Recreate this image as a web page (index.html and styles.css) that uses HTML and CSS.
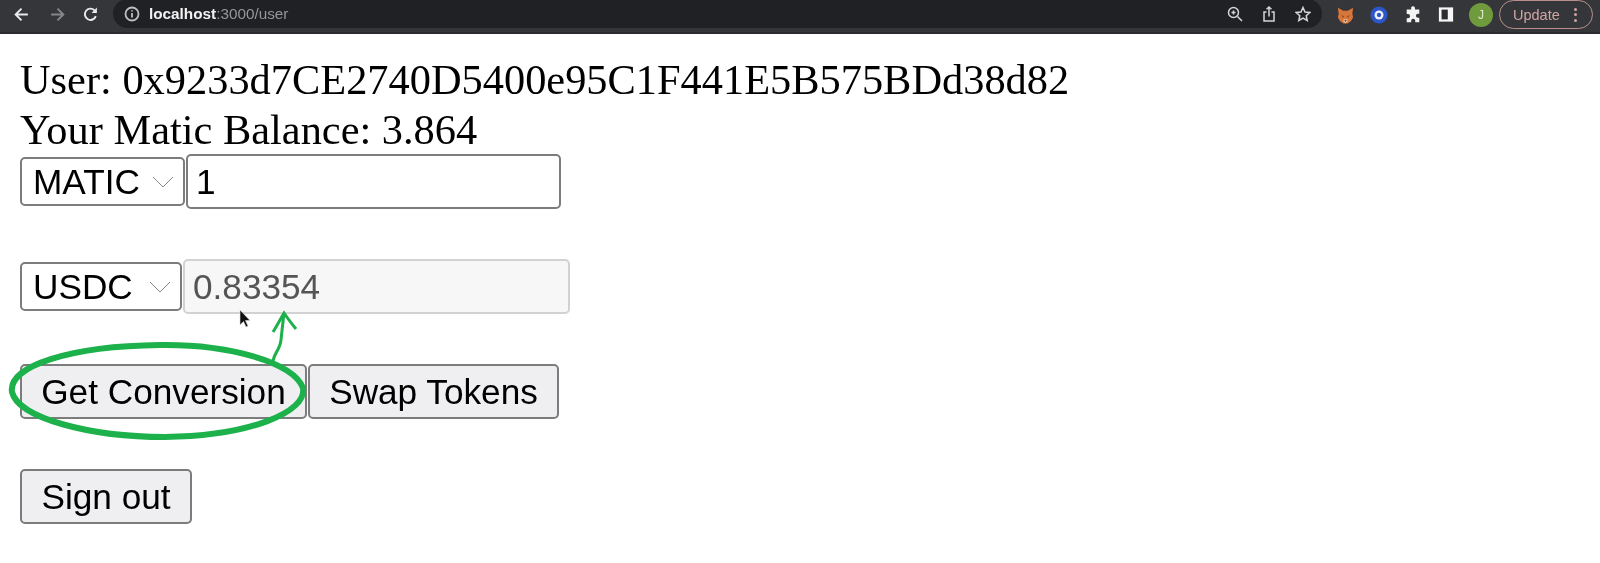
FILE: index.html
```html
<!DOCTYPE html>
<html lang="en">
<head>
  <meta charset="UTF-8">
  <title>localhost:3000/user</title>
  <link rel="stylesheet" href="styles.css">
</head>
<body>
  <header class="toolbar">
    <svg class="tb-icon back" viewBox="0 0 16 16"><path d="M14 8H2.500M8 2.500 2.500 8 8 13.500"/></svg>
    <svg class="tb-icon forward" viewBox="0 0 16 16"><path d="M2 8h11.500M8 2.500 13.500 8 8 13.500"/></svg>
    <svg class="tb-icon reload" viewBox="0 0 16 16"><path d="M13 9.500A5.300 5.300 0 1 1 11.700 4"/><path class="solid" d="M14 1.500v5H9z"/></svg>
    <div class="omnibox">
      <svg class="info" viewBox="0 0 16 16"><circle cx="8" cy="8" r="6.500"/><path d="M8 7v4.500M8 4.200v1.400"/></svg>
      <div class="url"><b>localhost</b>:3000/user</div>
      <svg class="omni-icon" viewBox="0 0 16 16"><circle cx="6.500" cy="6.500" r="5"/><path d="M10.500 10.500 15 15M4.500 6.500h4M6.500 4.500v4"/></svg>
      <svg class="omni-icon" viewBox="0 0 16 16"><path d="M5.500 6H3v9h10V6h-2.500M8 10.500V1M5.500 3.200 8 1l2.500 2.200"/></svg>
      <svg class="omni-icon" viewBox="0 0 16 16"><path d="M8 1.500 10 6l4.800.5-3.600 3.200 1 4.800L8 12l-4.200 2.500 1-4.800L1.200 6.500 6 6z"/></svg>
    </div>
    <svg class="ext fox" viewBox="0 0 20 20">
      <path fill="#d8763a" d="M1 1l6.500 3.500h5L19 1l-1 7 1 4-2.500 4.500-4 3h-5l-4-3L1 12l1-4z"/>
      <path fill="#8a4f2a" d="M5 9.500l3.500 1.500L7 13zM15 9.500 11.500 11 13 13z"/>
      <path fill="#efc9a4" d="M8 14l2 1 2-1 .5 3-2.500 2-2.500-2z"/>
      <path fill="#4a3428" d="M8.500 15.500h3L10 17.500z"/>
    </svg>
    <svg class="ext ring" viewBox="0 0 20 20"><circle cx="10" cy="10" r="9.500" fill="#2c55c8"/><circle cx="10" cy="10" r="5" fill="#eef1fa"/><circle cx="10" cy="10" r="2.400" fill="#2c55c8"/></svg>
    <svg class="ext puzzle" viewBox="0 0 20 20"><path fill="#f3f3f3" d="M8 1.500a2.200 2.200 0 0 1 4.200 1V4H17v4.500h-1.500a2.200 2.200 0 0 0 0 4.500H17V18h-4.500v-1.500a2.200 2.200 0 0 0-4.500 0V18H3v-4.500h1.500a2.200 2.200 0 0 0 0-4.500H3V4h5z"/></svg>
    <svg class="ext panel" viewBox="0 0 18 18"><path fill="#f6f6f6" d="M1 1h16v16H1z"/><path fill="#2c2d30" d="M4 3.500h7v11H4z"/></svg>
    <div class="avatar">J</div>
    <div class="update">
      <span>Update</span>
      <span class="dots"><i></i><i></i><i></i></span>
    </div>
  </header>

  <main class="page">
    <div class="info-line">User: 0x9233d7CE2740D5400e95C1F441E5B575BDd38d82</div>
    <div class="info-line">Your Matic Balance: 3.864</div>

    <div class="row">
      <select class="token token-from"><option>MATIC</option></select>
      <input class="amount" value="1">
    </div>
    <div class="row">
      <select class="token token-to"><option>USDC</option></select>
      <input class="amount amount-out" value="0.83354" disabled>
    </div>
    <div class="row">
      <button class="btn btn-convert">Get Conversion</button>
      <button class="btn btn-swap">Swap Tokens</button>
    </div>
    <div class="row">
      <button class="btn btn-signout">Sign out</button>
    </div>
  </main>

  <svg class="ink" viewBox="0 0 1600 563">
    <path d="M160 345C228 344 293 362 303 388C307 412 250 436 165 437C90 437 18 418 12 392C8 366 70 346 160 345Z"/>
    <path class="thin" d="M273 361C274 353 280 350 281 340C282 330 283 322 284 313M273 332C277 326 281 318 284 313C288 319 292 324 296 329"/>
    <path class="cursor" d="M240 310V325L243.500 321.500 246 327 248 326 245.500 320.500H250Z"/>
  </svg>
</body>
</html>
```

FILE: styles.css
```css
html, body { margin:0; padding:0; }
body { position:relative; height:563px; overflow:hidden; background:white; color:black; }

/* the reference is a video frame, everything is a bit soft */
.toolbar, .page { filter:blur(.4px); }

.toolbar {
  display:flex; align-items:flex-start; height:34px; box-sizing:border-box;
  background:#35363a; border-bottom:2px solid #2a2b2e;
}
.tb-icon { width:17px; height:17px; margin-top:6px; fill:none; stroke:#e8eaed; stroke-width:1.8; }
.tb-icon .solid { fill:#e8eaed; stroke:none; }
.back { margin-left:13px; }
.forward { margin-left:19px; stroke:#85868a; }
.reload { margin-left:16px; }

.omnibox {
  display:flex; align-items:center; width:1209px; height:29px; margin:-1px 0 0 14px; padding-top:1px;
  box-sizing:border-box; background:#202124; border-radius:15px;
}
.info { width:16px; height:16px; margin-left:11px; fill:none; stroke:#bdbec2; stroke-width:1.8; }
.url { flex:1; margin-left:9px; font:15.300px "Liberation Sans", sans-serif; color:#96979b; }
.url b { color:#f1f1f3; }
.omni-icon { width:16px; height:16px; margin-right:18px; fill:none; stroke:#d4d5d8; stroke-width:1.5; }
.omni-icon:last-child { margin-right:11px; }

.ext { flex:none; margin-top:6px; width:18px; height:18px; }
.fox { margin:7px 0 0 15px; width:17px; height:17px; }
.ring { margin-left:16px; }
.puzzle { margin-left:16px; }
.panel { margin-left:16px; width:16px; height:17px; }
.avatar {
  width:24px; height:24px; margin:3px 0 0 15px; border-radius:50%;
  background:#6f9b3c; color:#dfe8cf; text-align:center;
  font:12px/24px "Liberation Sans", sans-serif;
}
.update {
  display:flex; align-items:center; box-sizing:border-box;
  width:94px; height:29px; margin-left:6px; padding-left:13px;
  border:1.500px solid #b98f8c; border-radius:15px; color:#d0a5a3;
  font:14.500px "Liberation Sans", sans-serif;
}
.dots { display:flex; flex-direction:column; gap:2.500px; margin-left:14px; }
.dots i { width:3px; height:3px; border-radius:50%; background:#d0a5a3; }

.page { padding:21px 0 0 20px; font-family:"Liberation Serif", serif; font-size:42.400px; }
.info-line { line-height:49.500px; white-space:nowrap; }

.row { display:flex; align-items:center; gap:1px; margin-bottom:50px; height:55px; }

.token, .amount, .btn {
  box-sizing:border-box; margin:0; font-family:"Liberation Sans", sans-serif; font-size:35.200px;
  border:2.500px solid #7c7c7c; border-radius:5px; color:black;
}
.token {
  appearance:none; height:49px; padding-left:11px; background:white;
  background-image:url("data:image/svg+xml,%3Csvg xmlns='http://www.w3.org/2000/svg' width='22' height='12'%3E%3Cpath d='M1 1l10 10L21 1' fill='none' stroke='%23888' stroke-width='1'/%3E%3C/svg%3E");
  background-repeat:no-repeat; background-position:right 9px center;
}
.token-from { width:165px; }
.token-to { width:162px; }
.amount { width:375px; height:55px; padding:0 8px; background:white; }
.amount-out { width:387px; background:#f7f7f7; color:#555; border-color:#d2d2d2; }

.btn { height:55px; padding:0 16px; background:#efeff1; }
.btn-convert { width:287px; }
.btn-swap { width:251px; }
.btn-signout { width:172px; }

.ink { position:absolute; left:0; top:0; width:1600px; height:563px; fill:none; stroke:#1db14b; stroke-width:6; pointer-events:none; }
.ink .thin { stroke-width:3; }
.ink .cursor { fill:#111; stroke:#ddd; stroke-width:.6; }
```
